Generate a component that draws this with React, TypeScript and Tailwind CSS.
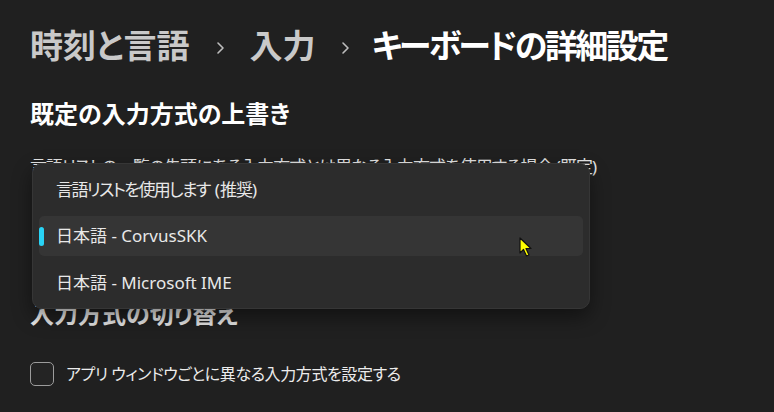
import React from 'react';

const font = "font-['Noto_Sans','Noto_Sans_CJK_JP',sans-serif] [font-feature-settings:'palt']";

function Chevron({ className }: { className: string }) {
  return (
    <svg width="10" height="16" viewBox="0 0 10 16" className={className}>
      <path d="M3 3 L8 8 L3 13" fill="none" stroke="#bdbdbd" strokeWidth="1.6" strokeLinecap="round" strokeLinejoin="round" />
    </svg>
  );
}

function Cursor() {
  return (
    <svg width="16" height="22" viewBox="0 0 16 22" className="absolute left-[519px] top-[237px]">
      <path d="M1 1 L1 16 L4.5 12.5 L7.5 19 L10 18 L7 11.5 L12 11.5 Z" fill="#ffff00" stroke="#111" strokeWidth="1.2" strokeLinejoin="round" />
    </svg>
  );
}

export default function App() {
  return (
    <div className={`relative w-[774px] h-[412px] overflow-hidden bg-[#202020] ${font}`}>
      <div className="flex flex-col px-[30px]">
        {/* Breadcrumb */}
        <div className="mt-[26px] flex items-center h-[40px] text-[33px] leading-[40px] font-semibold">
          <span className="text-[#c9c9c9]">時刻と言語</span>
          <Chevron className="mx-[25px] mt-[4px]" />
          <span className="text-[#c9c9c9]">入力</span>
          <Chevron className="ml-[24px] mr-[22px] mt-[4px]" />
          <span className="text-white tracking-[-2.5px]">キーボードの詳細設定</span>
        </div>

        <h2 className="mt-[32px] h-[32px] leading-[32px] text-[24px] font-bold text-white">
          既定の入力方式の上書き
        </h2>
        <p className="mt-[26px] h-[22px] leading-[22px] text-[17px] text-[#e6e6e6] whitespace-nowrap tracking-[-1px]">
          言語リストの一覧の先頭にある入力方式とは異なる入力方式を使用する場合 (既定)
        </p>

        <div className="h-[120px]" />

        <h2 className="h-[32px] leading-[32px] text-[24px] font-bold text-[#e8e8e8]">
          入力方式の切り替え
        </h2>

        <div className="mt-[32px] flex items-center gap-[12px] h-[24px]">
          <div className="w-[24px] h-[24px] rounded-[5px] border border-[#9c9c9c] bg-[#242424]" />
          <span className="text-[16px] text-[#ececec] tracking-[-0.4px]">アプリ ウィンドウごとに異なる入力方式を設定する</span>
        </div>
      </div>

      {/* Dropdown popup */}
      <div className="absolute left-[32px] top-[163px] w-[558px] h-[146px] rounded-[10px] bg-[#2c2c2c] border border-[#363636] shadow-[0_8px_20px_rgba(0,0,0,0.45)] flex flex-col gap-[6px] py-[5px] px-[6px]">
        <div className="flex items-center h-[41px] pl-[17px] text-[17px] text-[#e8e8e8]">
          <span className="tracking-[-1.6px]">言語リストを使用します</span>
          <span className="ml-[5px]">(</span>
          <span className="tracking-[-1px]">推奨</span>
          <span>)</span>
        </div>
        <div className="relative flex items-center h-[41px] pl-[17px] rounded-[5px] bg-[#353535] text-[17px] text-[#e8e8e8]">
          <div className="absolute left-[0px] top-[11px] w-[5px] h-[19px] rounded-full bg-[#29d3f5]" />
          日本語 - CorvusSKK
        </div>
        <div className="flex items-center h-[41px] pl-[17px] text-[17px] text-[#e8e8e8]">
          日本語 - Microsoft IME
        </div>
      </div>

      <Cursor />
    </div>
  );
}
